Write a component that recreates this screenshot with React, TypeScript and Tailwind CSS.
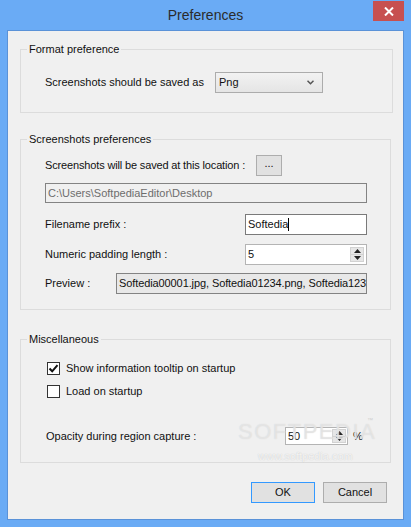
import React from 'react'

const font = "font-['Segoe_UI','Liberation_Sans',Arial,sans-serif]"

function Spinner({ className }: { className?: string }) {
  return (
    <div className={`flex flex-col w-[14px] h-full ${className ?? ''}`}>
      <div className="flex-1 flex items-center justify-center bg-[#e6e6e6] border border-[#d2d2d2]">
        <svg width="7" height="4" viewBox="0 0 7 4"><path d="M0 4 L3.5 0 L7 4 Z" fill="#222" /></svg>
      </div>
      <div className="flex-1 flex items-center justify-center bg-[#e6e6e6] border border-[#d2d2d2] border-t-0">
        <svg width="7" height="4" viewBox="0 0 7 4"><path d="M0 0 L3.5 4 L7 0 Z" fill="#222" /></svg>
      </div>
    </div>
  )
}

function Checkbox({ checked }: { checked?: boolean }) {
  return (
    <div className="w-[13px] h-[13px] bg-white border border-[#333] flex items-center justify-center shrink-0">
      {checked && (
        <svg width="11" height="11" viewBox="0 0 11 11">
          <path d="M1.5 5.5 L4.2 8.3 L9.5 2.2" fill="none" stroke="#111" strokeWidth="2" />
        </svg>
      )}
    </div>
  )
}

function Group({ title, className, children }: { title: string; className?: string; children: React.ReactNode }) {
  return (
    <fieldset className={`ml-[12px] border border-[#dcdcdc] ${className ?? ''}`}>
      <legend className="ml-[6px] px-[2px] leading-[16px]">{title}</legend>
      {children}
    </fieldset>
  )
}

function WinButton({ label, focused }: { label: string; focused?: boolean }) {
  return (
    <button
      className={`w-[64px] h-[21px] bg-[#e1e1e1] border flex items-center justify-center ${
        focused ? 'border-[#3399ff]' : 'border-[#adadad]'
      }`}
    >
      {label}
    </button>
  )
}

export default function App() {
  return (
    <div className={`relative w-[411px] h-[527px] bg-[#6aabf5] text-[11px] text-[#111] ${font}`}>
      {/* Title bar */}
      <div className="h-[30px] flex items-center justify-center">
        <span className="text-[14px] text-[#2b2b2b] mt-[1px]">Preferences</span>
      </div>
      <button className="absolute top-[1px] right-[7px] w-[31px] h-[20px] bg-[#c75050] flex items-center justify-center">
        <svg width="10" height="9" viewBox="0 0 10 9">
          <path d="M1 0.5 L9 8.5 M9 0.5 L1 8.5" stroke="#fff" strokeWidth="2" />
        </svg>
      </button>

      {/* Client area */}
      <div className="ml-[7px] w-[397px] h-[490px] border border-[#5a92d8] bg-[#f0f0f0] pt-[10px]">
        <Group title="Format preference" className="w-[373px] h-[72px]">
          <div className="mt-[15px] pl-[24px] flex items-center h-[21px]">
            <span className="w-[170px]">Screenshots should be saved as</span>
            <div className="w-[108px] h-[21px] border border-[#acacac] bg-gradient-to-b from-[#f2f2f2] to-[#e5e5e5] flex items-center pl-[3px] pr-[8px] justify-between">
              <span>Png</span>
              <svg width="7" height="5" viewBox="0 0 7 5">
                <path d="M0.5 0.8 L3.5 3.8 L6.5 0.8" fill="none" stroke="#555" strokeWidth="1.5" />
              </svg>
            </div>
          </div>
        </Group>

        <Group title="Screenshots preferences" className="mt-[18px] w-[371px] h-[179px]">
          <div className="pl-[24px]">
            <div className="mt-[8px] flex items-center h-[21px]">
              <span className="w-[211px] tracking-[-0.15px]">Screenshots will be saved at this location :</span>
              <button className="w-[26px] h-[21px] bg-[#e1e1e1] border border-[#adadad] leading-none pb-[4px]">...</button>
            </div>
            <div className="mt-[7px] w-[322px] h-[20px] border border-[#838383] bg-[#f0f0f0] text-[#6d6d6d] flex items-center pl-[2px]">
              C:\Users\SoftpediaEditor\Desktop
            </div>
            <div className="mt-[11px] flex items-center h-[21px]">
              <span className="w-[200px]">Filename prefix :</span>
              <div className="w-[122px] h-[21px] border border-[#7a7a7a] bg-white flex items-center pl-[2px]">
                Softedia<span className="w-px h-[13px] bg-black" />
              </div>
            </div>
            <div className="mt-[9px] flex items-center h-[21px]">
              <span className="w-[200px]">Numeric padding length :</span>
              <div className="w-[122px] h-[21px] border border-[#b4b4b4] bg-white flex items-center pl-[2px] pr-[2px] py-[2px]">
                <span className="flex-1">5</span>
                <Spinner />
              </div>
            </div>
            <div className="mt-[8px] flex items-center h-[21px]">
              <span className="w-[71px]">Preview :</span>
              <div className="w-[251px] h-[21px] border border-[#838383] bg-[#e8e8e8] flex items-center pl-[2px] overflow-hidden whitespace-nowrap tracking-[-0.1px]">
                Softedia00001.jpg, Softedia01234.png, Softedia123
              </div>
            </div>
          </div>
        </Group>

        <Group title="Miscellaneous" className="mt-[21px] w-[371px] h-[132px]">
          <div className="pl-[26px]">
            <div className="mt-[15px] flex items-center h-[13px] gap-[6px]">
              <Checkbox checked />
              <span>Show information tooltip on startup</span>
            </div>
            <div className="mt-[10px] flex items-center h-[13px] gap-[6px]">
              <Checkbox />
              <span>Load on startup</span>
            </div>
            <div className="mt-[29px] flex items-center h-[18px] -ml-[1px]">
              <span className="w-[239px]">Opacity during region capture :</span>
              <div className="w-[63px] h-[18px] border border-[#b4b4b4] bg-white flex items-center pl-[2px] pr-[1px] py-[1px]">
                <span className="flex-1">50</span>
                <Spinner />
              </div>
              <span className="ml-[5px]">%</span>
            </div>
          </div>
        </Group>

        <div className="mt-[19px] pr-[16px] flex justify-end gap-[8px]">
          <WinButton label="OK" focused />
          <WinButton label="Cancel" />
        </div>
      </div>

      {/* Softpedia watermark */}
      <div className="absolute left-[238px] top-[421px] leading-none text-[22px] tracking-[1.5px] text-white/40 [text-shadow:0_0_1px_#d0d0d0] pointer-events-none">
        SOFTPEDIA
      </div>
      <div className="absolute left-[367px] top-[417px] leading-none text-[6px] text-[#cfcfcf] pointer-events-none">™</div>
      <div className="absolute left-[258px] top-[451px] leading-none text-[11px] text-white/80 [text-shadow:0_0_1px_#b8b8b8] pointer-events-none">
        www.softpedia.com
      </div>
    </div>
  )
}
